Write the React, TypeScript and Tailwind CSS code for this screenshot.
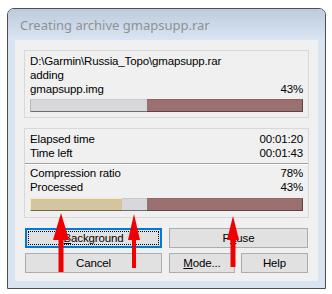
import React from "react";

type Seg = { w: number; fill: string; top: string; bottom: string; left?: string; right?: string };

function Bar({ segs }: { segs: Seg[] }) {
  return (
    <div className="flex h-[13px] w-[273px]">
      {segs.map((s, i) => (
        <div
          key={i}
          className="h-full border-t border-b box-border"
          style={{
            width: s.w,
            background: s.fill,
            borderTopColor: s.top,
            borderBottomColor: s.bottom,
            borderLeft: s.left ? `1px solid ${s.left}` : undefined,
            borderRight: s.right ? `1px solid ${s.right}` : undefined,
          }}
        />
      ))}
    </div>
  );
}

function Arrow({ x, tip, base, bottom, hw, sw }: { x: number; tip: number; base: number; bottom: number; hw: number; sw: number }) {
  const w = hw * 2 + 2;
  const h = bottom - tip;
  const c = w / 2;
  return (
    <svg
      className="absolute"
      style={{ left: x - c, top: tip }}
      width={w}
      height={h}
      viewBox={`0 0 ${w} ${h}`}
    >
      <polygon
        points={`${c},0 ${c + hw},${base - tip} ${c + sw / 2},${base - tip} ${c + sw / 2},${h} ${c - sw / 2},${h} ${c - sw / 2},${base - tip} ${c - hw},${base - tip}`}
        fill="#f00000"
      />
    </svg>
  );
}

function Btn({ w, children, focus }: { w: number; children: React.ReactNode; focus?: boolean }) {
  if (focus) {
    return (
      <div
        className="h-[20px] border-2 border-[#0078d7] bg-[#e1e1e1] flex items-center justify-center p-[1px]"
        style={{ width: w }}
      >
        <div className="w-full h-full border border-dotted border-black flex items-center justify-center text-black">
          {children}
        </div>
      </div>
    );
  }
  return (
    <div
      className="h-[20px] border border-[#adadad] bg-[#e1e1e1] flex items-center justify-center text-black"
      style={{ width: w }}
    >
      {children}
    </div>
  );
}

export default function App() {
  const gray: Seg = { w: 117, fill: "#d7d7dc", top: "#c8c8cc", bottom: "#6e6e72", left: "#b8b8bc" };
  return (
    <div className="relative w-[332px] h-[294px] bg-white pt-[8px] pl-[7px] font-['Liberation_Sans',Arial,sans-serif] text-[11.5px] tracking-[-0.15px] leading-[14px] overflow-hidden">
      <div className="w-[319px] h-[281px] border border-[#4f4f4f] rounded-t-[7px] bg-[#d9e4f1] flex flex-col overflow-hidden">
        <div className="h-[31px] shrink-0 bg-gradient-to-b from-[#bccbdc] to-[#dae5f2] pl-[12px] pt-[8px] text-[#8e9196] text-[13px] tracking-normal font-['Noto_Sans',sans-serif] leading-[16px]">
          Creating archive gmapsupp.rar
        </div>
        <div className="mx-[7px] h-[241px] bg-[#f0f0f0] flex flex-col px-[9px] pt-[10px]">
          <div className="h-[68px] border border-[#d8d8d8] flex flex-col px-[5px] pt-[3px] text-black">
            <div>D:\Garmin\Russia_Topo\gmapsupp.rar</div>
            <div>adding</div>
            <div className="flex justify-between">
              <span>gmapsupp.img</span>
              <span>43%</span>
            </div>
            <div className="mt-[3px]">
              <Bar
                segs={[
                  gray,
                  { w: 156, fill: "#9a7170", top: "#8e6664", bottom: "#5a4545", right: "#5a4545" },
                ]}
              />
            </div>
          </div>
          <div className="mt-[10px] h-[90px] border border-[#d8d8d8] flex flex-col pt-[3px] text-black">
            <div className="px-[5px] flex justify-between">
              <span>Elapsed time</span>
              <span>00:01:20</span>
            </div>
            <div className="px-[5px] flex justify-between">
              <span>Time left</span>
              <span>00:01:43</span>
            </div>
            <div className="mt-[3px] h-[1px] bg-[#a0a0a0]" />
            <div className="h-[1px] bg-white" />
            <div className="mt-[1px] px-[5px] flex justify-between">
              <span>Compression ratio</span>
              <span>78%</span>
            </div>
            <div className="px-[5px] flex justify-between">
              <span>Processed</span>
              <span>43%</span>
            </div>
            <div className="mt-[4px] px-[5px]">
              <Bar
                segs={[
                  { w: 92, fill: "#d4c49f", top: "#f4ecb4", bottom: "#6f6650", left: "#f4ecb4" },
                  { w: 25, fill: "#d7d7dc", top: "#c8c8cc", bottom: "#6e6e72" },
                  { w: 156, fill: "#9a7170", top: "#8e6664", bottom: "#5a4545", right: "#5a4545" },
                ]}
              />
            </div>
          </div>
          <div className="mt-[10px] px-[1px] flex gap-[7px]">
            <Btn w={137} focus>
              <span>
                <span className="underline">B</span>ackground
              </span>
            </Btn>
            <Btn w={139}>
              <span>
                P<span className="underline">a</span>use
              </span>
            </Btn>
          </div>
          <div className="mt-[5px] px-[1px] flex">
            <Btn w={137}>Cancel</Btn>
            <div className="ml-[7px]">
              <Btn w={66}>
                <span>
                  <span className="underline">M</span>ode...
                </span>
              </Btn>
            </div>
            <div className="ml-[6px]">
              <Btn w={67}>Help</Btn>
            </div>
          </div>
        </div>
      </div>
      <Arrow x={61} tip={213} base={240} bottom={272} hw={8} sw={5} />
      <Arrow x={134} tip={214} base={240} bottom={268} hw={6} sw={4} />
      <Arrow x={233} tip={216} base={240} bottom={267} hw={6} sw={5} />
    </div>
  );
}
